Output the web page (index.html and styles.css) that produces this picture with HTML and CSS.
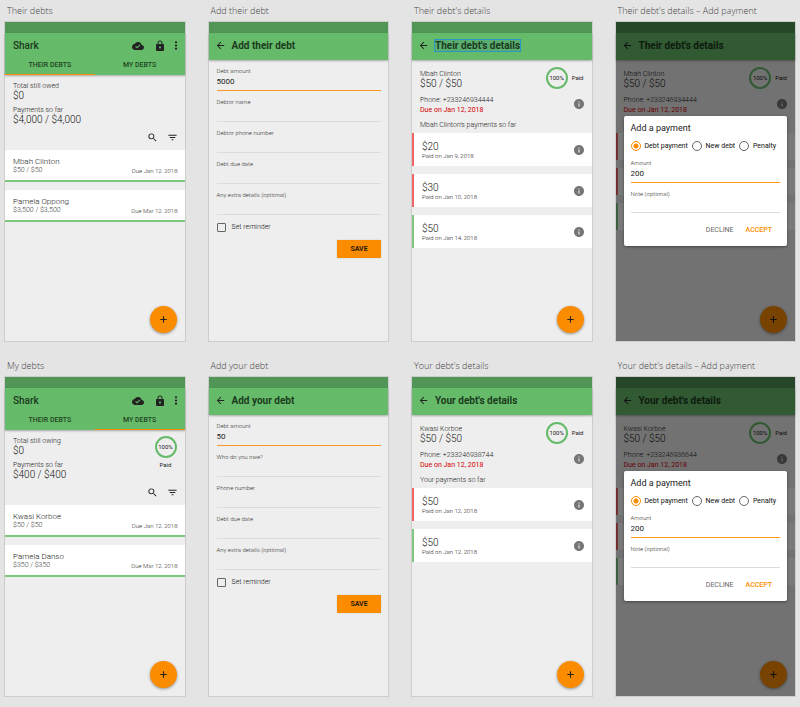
FILE: index.html
```html
<!DOCTYPE html>
<html lang="en">
<head>
<meta charset="utf-8">
<title>Shark</title>
<link rel="stylesheet" href="styles.css">
</head>
<body>
<svg class="sprite" aria-hidden="true">
  <symbol id="cloud" viewBox="0 0 24 24"><path d="M19.35 10.04C18.67 6.59 15.64 4 12 4 9.11 4 6.6 5.64 5.35 8.04 2.34 8.36 0 10.91 0 14c0 3.31 2.69 6 6 6h13c2.76 0 5-2.24 5-5 0-2.64-2.05-4.78-4.65-4.96zM10 17l-3.5-3.5 1.41-1.41L10 14.17 15.18 9l1.41 1.41L10 17z"/></symbol>
  <symbol id="lock" viewBox="0 0 24 24"><path d="M18 8h-1V6c0-2.76-2.24-5-5-5S7 3.24 7 6v2H6c-1.1 0-2 .9-2 2v10c0 1.100.9 2 2 2h12c1.100 0 2-.9 2-2V10c0-1.100-.9-2-2-2zm-6 9c-1.100 0-2-.9-2-2s.9-2 2-2 2 .9 2 2-.9 2-2 2zm3.100-9H8.900V6c0-1.710 1.390-3.100 3.100-3.100s3.100 1.390 3.100 3.100v2z"/></symbol>
  <symbol id="more" viewBox="0 0 8 24"><circle cx="4" cy="5" r="2.400"/><circle cx="4" cy="12" r="2.400"/><circle cx="4" cy="19" r="2.400"/></symbol>
  <symbol id="search" viewBox="0 0 24 24"><path d="M15.500 14h-.79l-.28-.27A6.470 6.470 0 0 0 16 9.500 6.500 6.500 0 1 0 9.500 16c1.610 0 3.090-.59 4.230-1.570l.27.28v.79l5 4.990L20.490 19l-4.990-5zm-6 0a4.500 4.500 0 1 1 0-9 4.500 4.500 0 0 1 0 9z"/></symbol>
  <symbol id="filter" viewBox="0 0 24 24"><path d="M10 18h4v-2h-4v2zM3 6v2h18V6H3zm3 7h12v-2H6v2z"/></symbol>
  <symbol id="back" viewBox="0 0 24 24"><path d="M20 11H7.830l5.590-5.590L12 4l-8 8 8 8 1.410-1.410L7.830 13H20v-2z"/></symbol>
  <symbol id="info" viewBox="0 0 24 24"><path d="M12 2C6.480 2 2 6.480 2 12s4.480 10 10 10 10-4.480 10-10S17.520 2 12 2zm1 15h-2v-6h2v6zm0-8h-2V7h2v2z"/></symbol>
  <symbol id="plus" viewBox="0 0 24 24"><path d="M19 13.200h-5.800V19h-2.400v-5.800H5v-2.400h5.800V5h2.400v5.800H19z"/></symbol>
</svg>

<main class="board">
  <section class="artboard">
    <h2 class="caption">Their debts</h2>
    <div class="phone">
      <div class="status"></div>
      <header class="bar home">
        <div class="bar-row">
          <h3 class="brand">Shark</h3>
          <button class="icon-btn cloud" aria-label="Sync"><svg><use href="#cloud"/></svg></button>
          <button class="icon-btn lock" aria-label="Lock"><svg><use href="#lock"/></svg></button>
          <button class="icon-btn more" aria-label="More"><svg><use href="#more"/></svg></button>
        </div>
        <nav class="tabs"><a class="tab active" href="#">THEIR DEBTS</a><a class="tab" href="#">MY DEBTS</a></nav>
      </header>
      <div class="summary">
        <dl class="totals"><dt>Total still owed</dt><dd>$0</dd><dt>Payments so far</dt><dd>$4,000 / $4,000</dd></dl>
      </div>
      <div class="tools">
        <button class="icon-btn" aria-label="Search"><svg><use href="#search"/></svg></button>
        <button class="icon-btn" aria-label="Filter"><svg><use href="#filter"/></svg></button>
      </div>
      <ul class="debts">
        <li class="debt"><span class="name">Mbah Clinton</span><span class="sum">$50 / $50</span><span class="due">Due Jan 12, 2018</span></li>
        <li class="debt"><span class="name">Pamela Oppong</span><span class="sum">$3,500 / $3,500</span><span class="due">Due Mar 12, 2018</span></li>
      </ul>
      <button class="fab" aria-label="Add debt"><svg><use href="#plus"/></svg></button>
    </div>
  </section>

  <section class="artboard">
    <h2 class="caption">Add their debt</h2>
    <div class="phone">
      <div class="status"></div>
      <header class="bar">
        <button class="icon-btn" aria-label="Back"><svg><use href="#back"/></svg></button>
        <h3 class="title">Add their debt</h3>
      </header>
      <form class="form">
        <div class="field active"><label for="a1">Debt amount</label><input id="a1" type="text" value="5000"></div>
        <div class="field"><label for="a2">Debtor name</label><input id="a2" type="text"></div>
        <div class="field"><label for="a3">Debtor phone number</label><input id="a3" type="text"></div>
        <div class="field"><label for="a4">Debt due date</label><input id="a4" type="text"></div>
        <div class="field"><label for="a5">Any extra details (optional)</label><input id="a5" type="text"></div>
        <label class="check"><input type="checkbox">Set reminder</label>
        <button class="save" type="button">SAVE</button>
      </form>
    </div>
  </section>

  <section class="artboard">
    <h2 class="caption">Their debt's details</h2>
    <div class="phone">
      <div class="status"></div>
      <header class="bar">
        <button class="icon-btn" aria-label="Back"><svg><use href="#back"/></svg></button>
        <h3 class="title selected">Their debt's details</h3>
      </header>
      <div class="details">
        <div class="person">
          <p class="who">Mbah Clinton<strong>$50 / $50</strong></p>
          <span class="ring">100%</span><span class="paid">Paid</span>
        </div>
        <div class="contact">
          <p>Phone: +233246934444<span class="overdue">Due on Jan 12, 2018</span></p>
          <button class="icon-btn info" aria-label="Debt info"><svg><use href="#info"/></svg></button>
        </div>
        <h4 class="list-title">Mbah Clinton's payments so far</h4>
      </div>
      <ul class="payments">
        <li class="payment"><p><strong>$20</strong>Paid on Jan 9, 2018</p><button class="icon-btn info" aria-label="Payment info"><svg><use href="#info"/></svg></button></li>
        <li class="payment"><p><strong>$30</strong>Paid on Jan 10, 2018</p><button class="icon-btn info" aria-label="Payment info"><svg><use href="#info"/></svg></button></li>
        <li class="payment settled"><p><strong>$50</strong>Paid on Jan 14, 2018</p><button class="icon-btn info" aria-label="Payment info"><svg><use href="#info"/></svg></button></li>
      </ul>
      <button class="fab" aria-label="Add payment"><svg><use href="#plus"/></svg></button>
    </div>
  </section>

  <section class="artboard">
    <h2 class="caption">Their debt's details – Add payment</h2>
    <div class="phone">
      <div class="status"></div>
      <header class="bar">
        <button class="icon-btn" aria-label="Back"><svg><use href="#back"/></svg></button>
        <h3 class="title">Their debt's details</h3>
      </header>
      <div class="details">
        <div class="person">
          <p class="who">Mbah Clinton<strong>$50 / $50</strong></p>
          <span class="ring">100%</span><span class="paid">Paid</span>
        </div>
        <div class="contact">
          <p>Phone: +233246934444<span class="overdue">Due on Jan 12, 2018</span></p>
          <button class="icon-btn info" aria-label="Debt info"><svg><use href="#info"/></svg></button>
        </div>
        <div class="list-title"></div>
      </div>
      <ul class="payments compact">
        <li class="payment"></li><li class="payment"></li><li class="payment settled"></li>
      </ul>
      <button class="fab" aria-label="Add payment"><svg><use href="#plus"/></svg></button>
      <div class="scrim">
        <form class="dialog">
          <h4>Add a payment</h4>
          <div class="radios">
            <label><input type="radio" name="kind1" checked>Debt payment</label>
            <label><input type="radio" name="kind1">New debt</label>
            <label><input type="radio" name="kind1">Penalty</label>
          </div>
          <div class="field active"><label for="b1">Amount</label><input id="b1" type="text" value="200"></div>
          <div class="field"><label for="b2">Note (optional)</label><input id="b2" type="text"></div>
          <div class="actions"><button type="button">DECLINE</button><button class="accept" type="button">ACCEPT</button></div>
        </form>
      </div>
    </div>
  </section>

  <section class="artboard">
    <h2 class="caption">My debts</h2>
    <div class="phone">
      <div class="status"></div>
      <header class="bar home">
        <div class="bar-row">
          <h3 class="brand">Shark</h3>
          <button class="icon-btn cloud" aria-label="Sync"><svg><use href="#cloud"/></svg></button>
          <button class="icon-btn lock" aria-label="Lock"><svg><use href="#lock"/></svg></button>
          <button class="icon-btn more" aria-label="More"><svg><use href="#more"/></svg></button>
        </div>
        <nav class="tabs"><a class="tab" href="#">THEIR DEBTS</a><a class="tab active" href="#">MY DEBTS</a></nav>
      </header>
      <div class="summary">
        <dl class="totals"><dt>Total still owing</dt><dd>$0</dd><dt>Payments so far</dt><dd>$400 / $400</dd></dl>
        <div class="progress"><span class="ring">100%</span><span class="paid">Paid</span></div>
      </div>
      <div class="tools">
        <button class="icon-btn" aria-label="Search"><svg><use href="#search"/></svg></button>
        <button class="icon-btn" aria-label="Filter"><svg><use href="#filter"/></svg></button>
      </div>
      <ul class="debts">
        <li class="debt"><span class="name">Kwasi Korboe</span><span class="sum">$50 / $50</span><span class="due">Due Jan 12, 2018</span></li>
        <li class="debt"><span class="name">Pamela Danso</span><span class="sum">$350 / $350</span><span class="due">Due Mar 12, 2018</span></li>
      </ul>
      <button class="fab" aria-label="Add debt"><svg><use href="#plus"/></svg></button>
    </div>
  </section>

  <section class="artboard">
    <h2 class="caption">Add your debt</h2>
    <div class="phone">
      <div class="status"></div>
      <header class="bar">
        <button class="icon-btn" aria-label="Back"><svg><use href="#back"/></svg></button>
        <h3 class="title">Add your debt</h3>
      </header>
      <form class="form">
        <div class="field active"><label for="c1">Debt amount</label><input id="c1" type="text" value="50"></div>
        <div class="field"><label for="c2">Who do you owe?</label><input id="c2" type="text"></div>
        <div class="field"><label for="c3">Phone number</label><input id="c3" type="text"></div>
        <div class="field"><label for="c4">Debt due date</label><input id="c4" type="text"></div>
        <div class="field"><label for="c5">Any extra details (optional)</label><input id="c5" type="text"></div>
        <label class="check"><input type="checkbox">Set reminder</label>
        <button class="save" type="button">SAVE</button>
      </form>
    </div>
  </section>

  <section class="artboard">
    <h2 class="caption">Your debt's details</h2>
    <div class="phone">
      <div class="status"></div>
      <header class="bar">
        <button class="icon-btn" aria-label="Back"><svg><use href="#back"/></svg></button>
        <h3 class="title">Your debt's details</h3>
      </header>
      <div class="details">
        <div class="person">
          <p class="who">Kwasi Korboe<strong>$50 / $50</strong></p>
          <span class="ring">100%</span><span class="paid">Paid</span>
        </div>
        <div class="contact">
          <p>Phone: +233246938744<span class="overdue">Due on Jan 12, 2018</span></p>
          <button class="icon-btn info" aria-label="Debt info"><svg><use href="#info"/></svg></button>
        </div>
        <h4 class="list-title">Your payments so far</h4>
      </div>
      <ul class="payments">
        <li class="payment"><p><strong>$50</strong>Paid on Jan 12, 2018</p><button class="icon-btn info" aria-label="Payment info"><svg><use href="#info"/></svg></button></li>
        <li class="payment settled"><p><strong>$50</strong>Paid on Jan 12, 2018</p><button class="icon-btn info" aria-label="Payment info"><svg><use href="#info"/></svg></button></li>
      </ul>
      <button class="fab" aria-label="Add payment"><svg><use href="#plus"/></svg></button>
    </div>
  </section>

  <section class="artboard">
    <h2 class="caption">Your debt's details – Add payment</h2>
    <div class="phone">
      <div class="status"></div>
      <header class="bar">
        <button class="icon-btn" aria-label="Back"><svg><use href="#back"/></svg></button>
        <h3 class="title">Your debt's details</h3>
      </header>
      <div class="details">
        <div class="person">
          <p class="who">Kwasi Korboe<strong>$50 / $50</strong></p>
          <span class="ring">100%</span><span class="paid">Paid</span>
        </div>
        <div class="contact">
          <p>Phone: +233246936644<span class="overdue">Due on Jan 12, 2018</span></p>
          <button class="icon-btn info" aria-label="Debt info"><svg><use href="#info"/></svg></button>
        </div>
        <div class="list-title"></div>
      </div>
      <ul class="payments compact">
        <li class="payment"></li><li class="payment"></li><li class="payment settled"></li>
      </ul>
      <button class="fab" aria-label="Add payment"><svg><use href="#plus"/></svg></button>
      <div class="scrim">
        <form class="dialog">
          <h4>Add a payment</h4>
          <div class="radios">
            <label><input type="radio" name="kind2" checked>Debt payment</label>
            <label><input type="radio" name="kind2">New debt</label>
            <label><input type="radio" name="kind2">Penalty</label>
          </div>
          <div class="field active"><label for="d1">Amount</label><input id="d1" type="text" value="200"></div>
          <div class="field"><label for="d2">Note (optional)</label><input id="d2" type="text"></div>
          <div class="actions"><button type="button">DECLINE</button><button class="accept" type="button">ACCEPT</button></div>
        </form>
      </div>
    </div>
  </section>
</main>
</body>
</html>
```
FILE: styles.css
```css
* { box-sizing: border-box; margin: 0; padding: 0; }

body {
  background: #e4e4e4;
  color: #222;
  font-family: Roboto, "Liberation Sans", sans-serif;
  font-size: 7px;
  font-weight: 300;
  line-height: 10px;
}

button, input { font: inherit; color: inherit; background: none; border: 0; }
ul { list-style: none; }
svg { display: block; width: 100%; height: 100%; fill: currentColor; }
.sprite { position: absolute; width: 0; height: 0; }

.board {
  display: grid;
  grid-template-columns: repeat(4, minmax(0, 1fr));
  gap: 13px 22px;
  padding: 0 4px 8px;
}

.caption {
  padding: 5px 3px 4px;
  color: #444;
  font: 300 9px/12px "Open Sans", "Noto Sans", sans-serif;
  white-space: nowrap;
}

.phone {
  position: relative;
  min-height: 321px;
  border: 1px solid #cdcdcd;
  background: #eee;
}

.status { height: 11px; background: #519657; }

.bar {
  display: flex;
  align-items: center;
  gap: 6px;
  height: 27px;
  padding: 0 6px 2px;
  background: #66bb6a;
  box-shadow: 0 1px 2px rgba(0, 0, 0, .3);
  color: #1b3a1d;
}

.title, .brand { font-size: 10px; line-height: 11px; font-weight: 700; }
.selected { outline: 1px solid #2a96c8; background: #5aae72; }

.home { display: block; height: 42px; padding: 0; }
.bar-row { display: flex; align-items: center; gap: 10px; height: 25px; padding: 0 7px 0 8px; }
.brand { flex: 1; font-weight: 500; }
.tabs { display: grid; grid-template-columns: 1fr 1fr; }
.tab {
  height: 17px;
  border-bottom: 1px solid transparent;
  color: #1f4522;
  font-weight: 500;
  line-height: 15px;
  text-align: center;
  text-decoration: none;
}
.tab.active { border-color: #fb8c00; }

.icon-btn { flex: none; width: 11px; height: 11px; color: #222; }
.cloud, .lock { width: 12px; height: 12px; }
.lock { margin-right: -2px; }
.more { width: 4px; }
.info { width: 12px; height: 12px; color: #757575; }

.summary { display: flex; justify-content: space-between; padding: 6px 8px 0; }
.totals dd { font-size: 10px; color: #111; }
.totals dd + dt { margin-top: 4px; }
.progress { display: flex; flex-direction: column; align-items: center; gap: 2px; }
.ring {
  width: 22px;
  height: 22px;
  border: 2px solid #66bb6a;
  border-radius: 50%;
  color: #222;
  font-size: 6px;
  font-weight: 400;
  line-height: 18px;
  text-align: center;
}
.paid { color: #222; font-size: 6px; font-weight: 400; }
.tools { display: flex; justify-content: flex-end; gap: 9px; padding: 7px 7px 7px; }

.debts, .payments { display: grid; gap: 8px; }
.debt {
  display: grid;
  grid-template-columns: 1fr auto;
  align-items: center;
  height: 32px;
  padding: 7px 7px 0 8px;
  border-bottom: 2px solid #7cc680;
  background: #fff;
  align-content: start;
}
.debt span { line-height: 9px; }
.debt .name { grid-column: 1 / 3; font-size: 8px; }
.debt .sum { color: #444; }
.debt .due { color: #333; font-size: 6px; }

.details { padding: 8px 8px 0; }
.person { display: flex; align-items: center; gap: 4px; height: 20px; }
.who { flex: 1; }
.who strong { display: block; font-size: 10px; font-weight: 300; line-height: 9px; color: #111; }
.contact { display: flex; align-items: center; justify-content: space-between; margin-top: 7px; }
.contact .info { margin: 0 -1px 2px; }
.overdue { display: block; color: #d50000; font-weight: 400; }
.list-title { height: 18px; padding-top: 5px; font-size: 7px; font-weight: 300; }

.payment {
  display: flex;
  align-items: center;
  justify-content: space-between;
  height: 33px;
  padding: 1px 7px 0 8px;
  border-left: 2px solid #ef6464;
  background: #fff;
  font-size: 6px;
  line-height: 8px;
}
.payment strong { display: block; font-size: 10px; font-weight: 300; line-height: 11px; color: #111; }
.settled { border-color: #81c784; }
.compact .payment { height: 27px; }

.fab {
  position: absolute;
  right: 8px;
  bottom: 8px;
  width: 27px;
  height: 27px;
  padding: 8px;
  border-radius: 50%;
  background: #fb8c00;
  box-shadow: 0 1px 3px rgba(0, 0, 0, .4);
}

.form { display: flex; flex-direction: column; padding: 6px 7px 0 8px; }
.field { display: flex; flex-direction: column; height: 31px; padding-top: 6px; }
.form .field:first-child { height: 25px; padding-top: 0; }
.field label { font-size: 6px; line-height: 9px; color: #333; }
.field input {
  flex: 1;
  min-width: 0;
  min-height: 0;
  padding-bottom: 2px;
  border-bottom: 1px solid #dcdcdc;
  font-size: 8px;
  font-weight: 400;
}
.field.active input { border-bottom: 1px solid #fb9a1e; color: #222; }

.check { display: flex; align-items: center; gap: 6px; height: 24px; color: #111; }
.check input { appearance: none; width: 9px; height: 9px; border: 1px solid #666; border-radius: 1px; }
.save {
  align-self: flex-end;
  width: 44px;
  height: 18px;
  margin-top: 1px;
  border-radius: 1px;
  background: #fb8c00;
  box-shadow: 0 0 1px rgba(0, 0, 0, .4);
  color: #2b1a00;
  font-weight: 700;
}

.scrim {
  position: absolute;
  inset: 0;
  display: flex;
  align-items: center;
  padding: 0 8px 2px;
  background: rgba(0, 0, 0, .52);
}
.dialog {
  flex: 1;
  min-width: 0;
  height: 130px;
  padding: 7px 7px 0;
  border-radius: 2px;
  background: #fff;
  box-shadow: 0 1px 3px rgba(0, 0, 0, .4);
}
.dialog h4 { font-size: 9px; font-weight: 400; color: #222; }
.radios { display: flex; justify-content: space-between; height: 24px; padding: 3px 4px 0 0; color: #111; }
.radios label { display: flex; align-items: center; gap: 4px; font-weight: 400; white-space: nowrap; }
.radios input { appearance: none; width: 10px; height: 10px; border: 1px solid #666; border-radius: 50%; }
.radios input:checked { border-color: #fb8c00; background: radial-gradient(circle, #fb8c00 2px, transparent 3px); }
.dialog .field { height: 30px; }
.dialog .field.active { height: 26px; padding-top: 1px; }
.dialog .field input { padding-bottom: 1px; }
.actions { display: flex; justify-content: flex-end; gap: 12px; padding: 12px 8px 0; color: #666; font-weight: 400; }
.accept { color: #fb8c00; font-weight: 500; }
```
